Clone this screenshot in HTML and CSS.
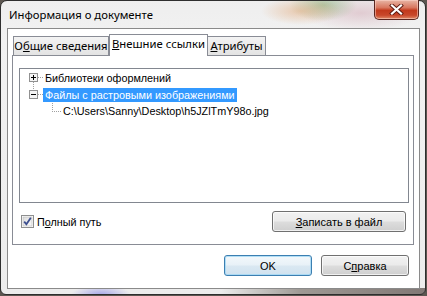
FILE: index.html
```html
<!DOCTYPE html>
<html lang="ru">

<head>
  <meta charset="UTF-8">
  <title>Информация о документе</title>
  <link rel="stylesheet" href="styles.css">
</head>

<body>
  <div class="window">
    <div class="titlebar">
      <span class="title">Информация о документе</span>
      <button class="close" title="Закрыть">
        <svg width="15" height="11" viewBox="0 0 15 11">
          <path d="M3 1.5 L12 9.5 M12 1.5 L3 9.5" stroke="#5b1a10" stroke-width="4" stroke-linecap="square"/>
          <path d="M3 1.5 L12 9.5 M12 1.5 L3 9.5" stroke="#ffffff" stroke-width="2.2" stroke-linecap="square"/>
        </svg>
      </button>
    </div>

    <div class="client">
      <div class="tabs">
        <div class="tab first">О<u>б</u>щие сведения</div>
        <div class="tab active"><u>В</u>нешние ссылки</div>
        <div class="tab last"><u>А</u>трибуты</div>
      </div>

      <div class="panel">
        <ul class="tree">
          <li class="node">
            <svg class="exp" width="9" height="9" viewBox="0 0 9 9">
              <rect x="0.5" y="0.5" width="8" height="8" fill="#f4f4f4" stroke="#919191"/>
              <path d="M2 4.5 H7 M4.5 2 V7" stroke="#000"/>
            </svg>
            <span class="dash"></span>
            <span class="label">Библиотеки оформлений</span>
          </li>
          <li class="node open">
            <svg class="exp" width="9" height="9" viewBox="0 0 9 9">
              <rect x="0.5" y="0.5" width="8" height="8" fill="#f4f4f4" stroke="#919191"/>
              <path d="M2 4.5 H7" stroke="#000"/>
            </svg>
            <span class="dash"></span>
            <span class="label selected">Файлы с растровыми изображениями</span>
          </li>
          <li class="node child">
            <span class="elbow"></span>
            <span class="label">C:\Users\Sanny\Desktop\h5JZlTmY98o.jpg</span>
          </li>
        </ul>

        <div class="panel-row">
          <label class="check">
            <svg width="13" height="13" viewBox="0 0 13 13">
              <defs>
                <linearGradient id="cb" x1="0" y1="0" x2="1" y2="1">
                  <stop offset="0" stop-color="#dcdcdc"/>
                  <stop offset="1" stop-color="#fbfbfb"/>
                </linearGradient>
              </defs>
              <rect x="0.5" y="0.5" width="12" height="12" fill="#fff" stroke="#8e8f8f"/>
              <rect x="2" y="2" width="9" height="9" fill="url(#cb)" stroke="#b8b8b8" stroke-width="0.6"/>
              <path d="M3.2 6.6 L5.4 9.2 L9.8 2.8" fill="none" stroke="#3d4f8f" stroke-width="1.8"/>
            </svg>
            <span>П<u>о</u>лный путь</span>
          </label>
          <button class="btn save"><u>З</u>аписать в файл</button>
        </div>
      </div>

      <div class="footer">
        <button class="btn default">OK</button>
        <button class="btn">С<u>п</u>равка</button>
      </div>
    </div>
  </div>
</body>

</html>
```

FILE: styles.css
```css
body {
  margin: 0;
  width: 427px;
  height: 296px;
  background: #5c5650;
  font-family: "Liberation Sans", Arial, sans-serif;
  font-size: 10.8px;
  overflow: hidden;
}

.window {
  width: 413px;
  height: 288px;
  padding: 0 5px 5px 6px;
  border: 1px solid #2e2e2e;
  border-radius: 7px 7px 6px 6px;
  display: flex;
  flex-direction: column;
  background:
    radial-gradient(ellipse 40px 14px at 300px 10px, rgba(226, 168, 120, 0.55), transparent),
    radial-gradient(ellipse 34px 16px at 322px 4px, rgba(120, 170, 110, 0.55), transparent),
    radial-gradient(ellipse 60px 18px at 360px 12px, rgba(215, 180, 190, 0.6), transparent),
    radial-gradient(ellipse 30px 10px at 100px 294px, rgba(120, 120, 230, 0.6), transparent),
    linear-gradient(to right, transparent 0, transparent 220px, rgba(80, 70, 60, 0.5) 300px, rgba(60, 45, 40, 0.6) 420px) bottom / 100% 6px no-repeat,
    linear-gradient(to bottom, #eeeeee, #f2f2f2 40px, #ececec);
}

.titlebar {
  height: 27px;
  display: flex;
  align-items: flex-start;
  justify-content: space-between;
}

.title {
  font-family: "Noto Sans", sans-serif;
  font-size: 11.3px;
  color: #000;
  padding: 6px 0 0 2px;
}

.close {
  width: 45px;
  height: 20px;
  margin: -1px 1px 0 0;
  padding: 0;
  border: 1px solid #5a2620;
  border-top: none;
  border-radius: 0 0 5px 5px;
  background: linear-gradient(to bottom, #e8b6a6 0%, #d8775f 40%, #c2391c 55%, #c8472a 80%, #e08a68 100%);
  box-shadow: inset 0 0 0 1px rgba(255, 220, 210, 0.5);
  display: flex;
  align-items: center;
  justify-content: center;
}

.client {
  flex: 1;
  border: 1px solid #8a8a8a;
  background: #fff;
  padding: 6px 5px 0 4px;
  display: flex;
  flex-direction: column;
}

.tabs {
  display: flex;
  align-items: flex-end;
  height: 21px;
  position: relative;
  z-index: 1;
  margin-bottom: -1px;
  font-family: "Noto Sans", sans-serif;
  font-size: 11.3px;
  white-space: nowrap;
}

.tab {
  height: 19px;
  box-sizing: border-box;
  border: 1px solid #898c95;
  border-bottom: none;
  background: linear-gradient(to bottom, #f3f3f3, #e3e3e3);
  line-height: 18px;
  margin-bottom: 1px;
  text-align: center;
}

.tab.first {
  margin-left: 1px;
  width: 96px;
}

.tab.active {
  height: 22px;
  width: 99px;
  background: #fff;
  margin: 0 -1px 0 0;
  line-height: 18px;
}

.tab.last {
  width: 59px;
}

.panel {
  height: 176px;
  border: 1px solid #898c95;
  padding: 12px 4px 0 6px;
}

.tree {
  list-style: none;
  margin: 0;
  padding: 0;
  height: 133px;
  border: 1px solid #828790;
}

.node {
  display: flex;
  align-items: center;
  height: 17px;
  padding-left: 9px;
  white-space: nowrap;
  position: relative;
}

.exp {
  display: block;
  flex-shrink: 0;
}

.node.open::before {
  content: "";
  position: absolute;
  left: 13px;
  top: -4px;
  height: 7px;
  border-left: 1px dotted #a0a0a0;
}

.dash {
  width: 5px;
  border-top: 1px dotted #a0a0a0;
}

.label {
  padding: 0 2px;
  line-height: 14px;
  color: #000;
}

.label.selected {
  background: #3399ff;
  color: #fff;
}

.node.child {
  padding-left: 32px;
  align-items: flex-start;
}

.elbow {
  width: 8px;
  height: 8px;
  border-left: 1px dotted #a0a0a0;
  border-bottom: 1px dotted #a0a0a0;
}

.node.child .label {
  margin-top: 1px;
}

.panel-row {
  display: flex;
  align-items: center;
  justify-content: space-between;
  margin-top: 8px;
}

.check {
  display: flex;
  align-items: center;
  gap: 3px;
  margin-left: 2px;
}

.check svg {
  display: block;
}

.btn {
  height: 21px;
  box-sizing: border-box;
  border: 1px solid #707070;
  border-radius: 3px;
  background: linear-gradient(to bottom, #f2f2f2 0%, #ebebeb 48%, #dddddd 52%, #cfcfcf 100%);
  box-shadow: inset 0 0 0 1px rgba(255, 255, 255, 0.7);
  font-family: "Liberation Sans", Arial, sans-serif;
  font-size: 11px;
  color: #000;
  padding: 0;
  width: 88px;
}

.btn.save {
  width: 134px;
  margin-right: 3px;
}

.btn.default {
  border-color: #3c7fb1;
  background: linear-gradient(to bottom, #f3f8fb 0%, #e8f1f7 48%, #dae8f2 52%, #d0e2ef 100%);
  box-shadow: inset 0 0 0 1px rgba(160, 215, 245, 0.8);
}

.footer {
  display: flex;
  justify-content: flex-end;
  gap: 9px;
  margin-top: 10px;
  padding-right: 5px;
}
```
